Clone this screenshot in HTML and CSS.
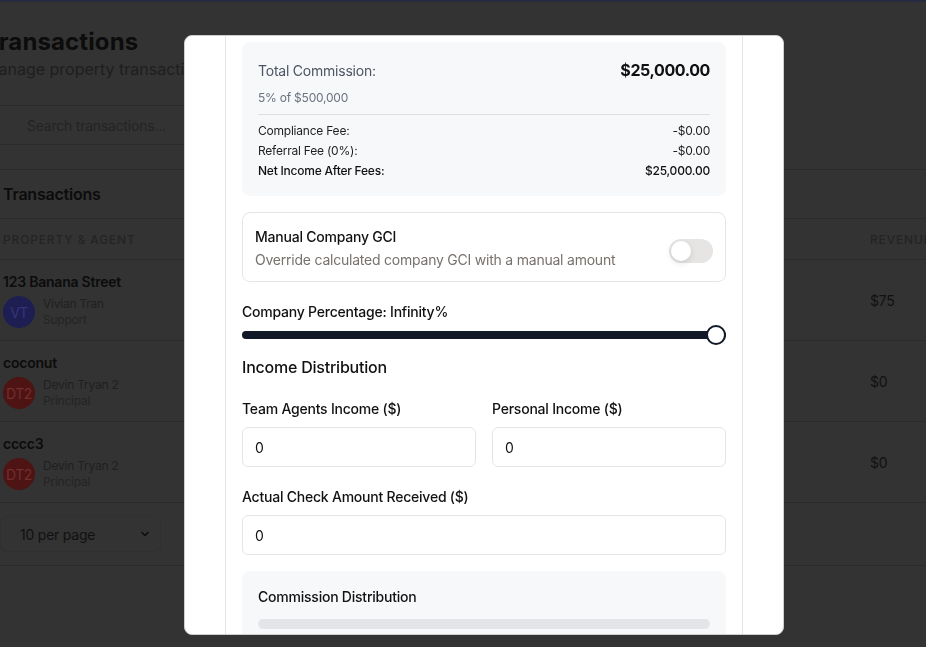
FILE: index.html
```html
<!DOCTYPE html>
<html lang="en">
<head>
<meta charset="utf-8">
<title>Transactions</title>
<link rel="stylesheet" href="styles.css">
</head>
<body>
<div class="topbar"></div>
<main class="page">
  <header class="page-head">
    <h1>Transactions</h1>
    <p>Manage property transactions</p>
  </header>
  <div class="search">Search transactions...</div>
  <section class="card">
    <div class="card-head">Transactions</div>
    <div class="trow thead">
      <div>Property &amp; Agent</div>
      <div>Revenue</div>
    </div>
    <div class="trow">
      <div>
        <div class="prop">123 Banana Street</div>
        <div class="agent">
          <span class="avatar av-blue">VT</span>
          <span class="agent-text"><span>Vivian Tran</span><span>Support</span></span>
        </div>
      </div>
      <div class="rev">$75</div>
    </div>
    <div class="trow">
      <div>
        <div class="prop">coconut</div>
        <div class="agent">
          <span class="avatar av-red">DT2</span>
          <span class="agent-text"><span>Devin Tryan 2</span><span>Principal</span></span>
        </div>
      </div>
      <div class="rev">$0</div>
    </div>
    <div class="trow">
      <div>
        <div class="prop">cccc3</div>
        <div class="agent">
          <span class="avatar av-red">DT2</span>
          <span class="agent-text"><span>Devin Tryan 2</span><span>Principal</span></span>
        </div>
      </div>
      <div class="rev">$0</div>
    </div>
    <div class="card-foot">
      <div class="select">10 per page
        <svg width="12" height="12" viewBox="0 0 12 12"><path d="M3 4.5 6 7.5 9 4.5" fill="none" stroke="#0d0d0d" stroke-width="1.6" stroke-linecap="round" stroke-linejoin="round"/></svg>
      </div>
    </div>
  </section>
</main>

<div class="modal">
  <div class="modal-scroll">
    <div class="summary">
      <div class="sum-top">
        <span class="sum-label">Total Commission:</span>
        <span class="sum-total">$25,000.00</span>
      </div>
      <div class="sum-sub">5% of $500,000</div>
      <div class="fees">
        <div class="fee"><span>Compliance Fee:</span><span>-$0.00</span></div>
        <div class="fee"><span>Referral Fee (0%):</span><span>-$0.00</span></div>
        <div class="fee fee-net"><span>Net Income After Fees:</span><span>$25,000.00</span></div>
      </div>
    </div>

    <div class="gci">
      <div>
        <div class="gci-title">Manual Company GCI</div>
        <div class="gci-sub">Override calculated company GCI with a manual amount</div>
      </div>
      <div class="switch"><span class="switch-thumb"></span></div>
    </div>

    <div class="label pct-label">Company Percentage: Infinity%</div>
    <div class="slider">
      <div class="slider-track"></div>
      <span class="slider-thumb"></span>
    </div>

    <h3 class="section-title">Income Distribution</h3>
    <div class="two-col">
      <div class="field">
        <div class="label">Team Agents Income ($)</div>
        <div class="input">0</div>
      </div>
      <div class="field">
        <div class="label">Personal Income ($)</div>
        <div class="input">0</div>
      </div>
    </div>
    <div class="field check-field">
      <div class="label">Actual Check Amount Received ($)</div>
      <div class="input">0</div>
    </div>

    <div class="dist">
      <div class="label">Commission Distribution</div>
      <div class="dist-bar"></div>
    </div>
  </div>
</div>
</body>
</html>
```

FILE: styles.css
```css
* { box-sizing: border-box; }

html, body {
  margin: 0;
  height: 100%;
}

body {
  background: #333333;
  font-family: Inter, "Noto Sans", "Liberation Sans", sans-serif;
  letter-spacing: -0.014em;
  overflow: hidden;
  color: #0d0d0d;
}

.topbar {
  height: 2px;
  background: #262b40;
}

/* dimmed page behind the dialog */
.page {
  margin-left: -16px;
  width: 1000px;
}

.page-head {
  padding-top: 25px;
}

.page-head h1 {
  margin: 0;
  font-size: 24px;
  line-height: 30px;
  font-weight: 700;
  letter-spacing: 0.005em;
  color: #0c0c0c;
}

.page-head p {
  margin: 0;
  font-size: 16px;
  line-height: 24px;
  letter-spacing: 0;
  color: #1e1e1e;
}

.search {
  margin-top: 24px;
  height: 40px;
  width: 520px;
  border: 1px solid #2b2b2b;
  border-radius: 6px;
  padding-left: 42px;
  font-size: 14px;
  line-height: 39px;
  color: #232323;
}

.card {
  margin-top: 24px;
  border: 1px solid #2b2b2b;
  border-radius: 8px;
}

.card-head {
  height: 49px;
  border-bottom: 1px solid #2b2b2b;
  padding: 0 18px;
  display: flex;
  align-items: center;
  font-size: 16px;
  font-weight: 600;
  color: #0c0c0c;
}

.trow {
  display: grid;
  grid-template-columns: 867px 1fr;
  align-items: center;
  padding: 12px 18px;
  border-bottom: 1px solid #2b2b2b;
  height: 81px;
}

.thead {
  height: 41px;
  padding: 0 18px;
  font-size: 12px;
  font-weight: 500;
  letter-spacing: 0.07em;
  text-transform: uppercase;
  color: #242424;
}

.prop {
  font-size: 14px;
  line-height: 20px;
  font-weight: 600;
  color: #0c0c0c;
}

.agent {
  margin-top: 4px;
  display: flex;
  align-items: center;
  gap: 8px;
}

.avatar {
  width: 32px;
  height: 32px;
  border-radius: 50%;
  display: flex;
  align-items: center;
  justify-content: center;
  font-size: 14px;
  letter-spacing: -0.5px;
  overflow: hidden;
}

.av-blue { background: #1e1e52; color: #34347a; }
.av-red { background: #4e1313; color: #732e2e; }

.agent-text {
  display: flex;
  flex-direction: column;
  font-size: 12px;
  line-height: 16px;
  color: #202020;
}

.agent-text span:last-child { color: #242424; }

.rev {
  font-size: 14px;
  color: #111111;
}

.card-foot {
  height: 62px;
  padding: 0 15px;
  display: flex;
  align-items: center;
}

.select {
  width: 161px;
  height: 36px;
  border: 1px solid #303030;
  border-radius: 6px;
  padding: 0 9px 0 19px;
  display: flex;
  align-items: center;
  justify-content: space-between;
  font-size: 14px;
  color: #111111;
}

/* dialog */
.modal {
  position: fixed;
  left: 184px;
  top: 35px;
  width: 600px;
  height: 600px;
  background: #ffffff;
  border: 1px solid #cfcfcf;
  border-radius: 8px;
  padding: 0 40px;
  overflow: hidden;
  color: #111111;
}

.modal-scroll {
  height: 100%;
  border-left: 1px solid #e5e5e5;
  border-right: 1px solid #e5e5e5;
  padding: 6px 16px 0;
}

.summary {
  background: #f7f8fa;
  border-radius: 8px;
  padding: 16px 16px 15px;
}

.sum-top {
  display: flex;
  justify-content: space-between;
  align-items: center;
  height: 24px;
}

.sum-label {
  font-size: 14px;
  color: #4b5563;
}

.sum-total {
  font-size: 16px;
  font-weight: 700;
  letter-spacing: -0.025em;
  color: #111111;
}

.sum-sub {
  margin-top: 6px;
  font-size: 12px;
  line-height: 20px;
  color: #6b7280;
}

.fees {
  margin-top: 6px;
  border-top: 1px solid #e2e0dd;
  padding-top: 6px;
}

.fee {
  display: flex;
  justify-content: space-between;
  font-size: 12px;
  line-height: 20px;
  color: #1f1f1f;
}

.fee-net { font-weight: 500; color: #111111; }

.gci {
  margin-top: 16px;
  border: 1px solid #e5e5e5;
  border-radius: 8px;
  padding: 14px 12px 11px;
  display: flex;
  justify-content: space-between;
  align-items: center;
}

.gci-title {
  font-size: 14px;
  line-height: 20px;
  font-weight: 500;
  color: #111111;
}

.gci-sub {
  margin-top: 3px;
  font-size: 14px;
  line-height: 20px;
  color: #78716c;
}

.switch {
  width: 44px;
  height: 24px;
  border-radius: 12px;
  background: #e7e5e4;
  padding: 2px;
  margin-top: 4px;
}

.switch-thumb {
  display: block;
  width: 20px;
  height: 20px;
  border-radius: 50%;
  background: #ffffff;
  box-shadow: 0 2px 6px rgba(0, 0, 0, 0.12);
}

.label {
  font-size: 14px;
  line-height: 20px;
  font-weight: 500;
  color: #111111;
}

.pct-label { margin-top: 20px; }

.slider {
  position: relative;
  margin-top: 3px;
  height: 20px;
  display: flex;
  align-items: center;
}

.slider-track {
  width: 100%;
  height: 8px;
  border-radius: 4px;
  background: #111827;
}

.slider-thumb {
  position: absolute;
  right: 0;
  top: 0;
  width: 20px;
  height: 20px;
  border-radius: 50%;
  background: #ffffff;
  border: 2px solid #111827;
}

.section-title {
  margin: 8px 0 0;
  font-size: 16px;
  line-height: 28px;
  font-weight: 500;
  color: #111111;
}

.two-col {
  margin-top: 18px;
  display: grid;
  grid-template-columns: 1fr 1fr;
  gap: 16px;
}

.field .label { margin-bottom: 8px; }

.input {
  height: 40px;
  border: 1px solid #e5e5e5;
  border-radius: 6px;
  padding: 0 12px;
  display: flex;
  align-items: center;
  font-size: 14px;
  color: #111111;
}

.check-field { margin-top: 20px; }

.dist {
  margin-top: 16px;
  background: #f7f8fa;
  border-radius: 8px;
  padding: 16px;
  height: 120px;
}

.dist-bar {
  margin-top: 12px;
  height: 10px;
  border-radius: 5px;
  background: #e4e5e9;
}
```
